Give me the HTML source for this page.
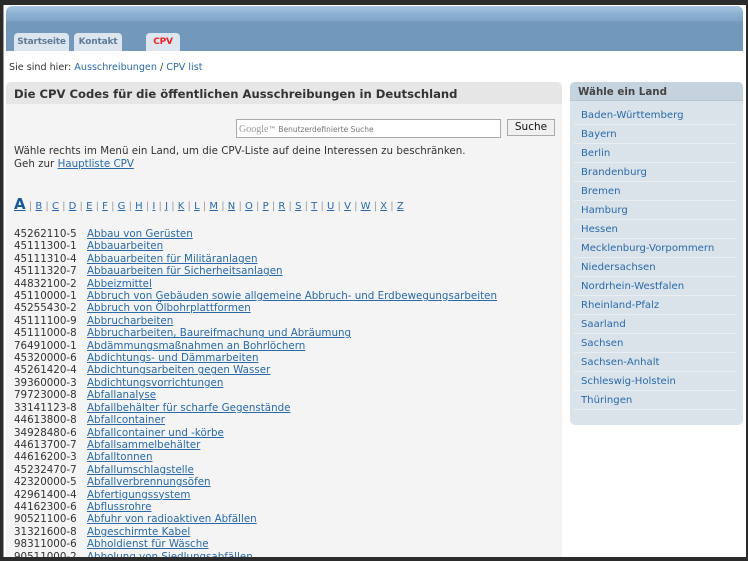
<!DOCTYPE html>
<html><head><meta charset="utf-8">
<style>
*{margin:0;padding:0;box-sizing:border-box}
html,body{width:748px;height:561px;overflow:hidden;background:#2b2b2b}
body{font-family:"DejaVu Sans","Liberation Sans",sans-serif;position:relative}
#page{position:absolute;left:3px;top:5px;width:743px;height:552px;background:#fff;overflow:hidden;border-left:1px solid #999}
#hdr{position:absolute;left:2px;top:1px;width:737px;height:45px;border-radius:6px 6px 0 0;background:linear-gradient(#a9c6e0 0,#8cb0d2 8px,#7ea4c6 15px,#7299bb 16px,#7299bb 45px)}
.tab{position:absolute;top:27px;height:18px;background:#dde5ee;border-radius:4px 4px 0 0;font-size:9px;font-weight:bold;color:#5f7c98;text-align:center;line-height:19px;letter-spacing:-0.2px}
a{color:#2a6aa8}
#bc{position:absolute;left:5px;top:57px;font-size:9.6px;color:#333}
#bc a{text-decoration:none}
#main{position:absolute;left:2px;top:77px;width:556px;height:480px;background:#f4f4f4;border-radius:5px 5px 0 0}
#mh{height:22px;background:#e6e6e6;border-radius:5px 5px 0 0;font-size:11.6px;font-weight:bold;color:#333;padding:5px 0 0 8px}
#sbox{position:absolute;left:230px;top:37px;width:265px;height:19px;background:#fff;border:1px solid #aaa;font-size:7.5px;color:#777;padding:4px 0 0 2px}
#sbox b{font-family:"Liberation Serif",serif;font-weight:normal;font-size:10px;color:#999}
#sbtn{position:absolute;left:501px;top:37px;width:48px;height:17px;background:#f0f0f0;border:1px solid #aaa;font-size:10.5px;color:#111;text-align:center;line-height:15px}
#intro{position:absolute;left:8px;top:63px;font-size:10.3px;color:#333;line-height:13px}
#az{position:absolute;left:8px;top:113px;font-size:10px;color:#999;white-space:nowrap}
#az a{color:#2a6aa8;text-decoration:underline}
#az a.big{font-size:15px;font-weight:bold;color:#1a5a98}
#list{position:absolute;left:8px;top:146px;font-size:10.3px;line-height:12.4px;color:#333;white-space:nowrap}
#list a{text-decoration:underline}
#list span{display:inline-block;width:73px}
#side{position:absolute;left:566px;top:77px;width:173px;height:343px;background:#dae3ea;border-radius:5px}
#sh{height:19px;background:#c5d3de;border-bottom:1px solid #b8c6d2;border-radius:5px 5px 0 0;font-size:10.3px;font-weight:bold;color:#444;padding:4px 0 0 8px}
#side ul{list-style:none;margin:5px 7px 0 4px}
#side li{height:19px;border-bottom:1px solid #e8eef2;font-size:10.1px;color:#2a6aa8;padding:4px 0 0 7px}
</style></head><body>
<div id="page">
<div id="hdr">
<div class="tab" style="left:8px;width:55px">Startseite</div>
<div class="tab" style="left:68px;width:48px">Kontakt</div>
<div class="tab" style="left:140px;width:34px;color:#e22">CPV</div>
</div>
<div id="bc">Sie sind hier: <a>Ausschreibungen</a> / <a>CPV list</a></div>
<div id="main">
<div id="mh">Die CPV Codes für die öffentlichen Ausschreibungen in Deutschland</div>
<div id="sbox"><b>Google</b>™ Benutzerdefinierte Suche</div>
<div id="sbtn">Suche</div>
<div id="intro">Wähle rechts im Menü ein Land, um die CPV-Liste auf deine Interessen zu beschränken.<br>Geh zur <a style="text-decoration:underline">Hauptliste CPV</a></div>
<div id="az"><a class="big">A</a> | <a>B</a> | <a>C</a> | <a>D</a> | <a>E</a> | <a>F</a> | <a>G</a> | <a>H</a> | <a>I</a> | <a>J</a> | <a>K</a> | <a>L</a> | <a>M</a> | <a>N</a> | <a>O</a> | <a>P</a> | <a>R</a> | <a>S</a> | <a>T</a> | <a>U</a> | <a>V</a> | <a>W</a> | <a>X</a> | <a>Z</a></div>
<div id="list">
<span>45262110-5</span><a>Abbau von Gerüsten</a><br>
<span>45111300-1</span><a>Abbauarbeiten</a><br>
<span>45111310-4</span><a>Abbauarbeiten für Militäranlagen</a><br>
<span>45111320-7</span><a>Abbauarbeiten für Sicherheitsanlagen</a><br>
<span>44832100-2</span><a>Abbeizmittel</a><br>
<span>45110000-1</span><a>Abbruch von Gebäuden sowie allgemeine Abbruch- und Erdbewegungsarbeiten</a><br>
<span>45255430-2</span><a>Abbruch von Ölbohrplattformen</a><br>
<span>45111100-9</span><a>Abbrucharbeiten</a><br>
<span>45111000-8</span><a>Abbrucharbeiten, Baureifmachung und Abräumung</a><br>
<span>76491000-1</span><a>Abdämmungsmaßnahmen an Bohrlöchern</a><br>
<span>45320000-6</span><a>Abdichtungs- und Dämmarbeiten</a><br>
<span>45261420-4</span><a>Abdichtungsarbeiten gegen Wasser</a><br>
<span>39360000-3</span><a>Abdichtungsvorrichtungen</a><br>
<span>79723000-8</span><a>Abfallanalyse</a><br>
<span>33141123-8</span><a>Abfallbehälter für scharfe Gegenstände</a><br>
<span>44613800-8</span><a>Abfallcontainer</a><br>
<span>34928480-6</span><a>Abfallcontainer und -körbe</a><br>
<span>44613700-7</span><a>Abfallsammelbehälter</a><br>
<span>44616200-3</span><a>Abfalltonnen</a><br>
<span>45232470-7</span><a>Abfallumschlagstelle</a><br>
<span>42320000-5</span><a>Abfallverbrennungsöfen</a><br>
<span>42961400-4</span><a>Abfertigungssystem</a><br>
<span>44162300-6</span><a>Abflussrohre</a><br>
<span>90521100-6</span><a>Abfuhr von radioaktiven Abfällen</a><br>
<span>31321600-8</span><a>Abgeschirmte Kabel</a><br>
<span>98311000-6</span><a>Abholdienst für Wäsche</a><br>
<span>90511000-2</span><a>Abholung von Siedlungsabfällen</a>
</div>
</div>
<div id="side">
<div id="sh">Wähle ein Land</div>
<ul>
<li>Baden-Württemberg</li><li>Bayern</li><li>Berlin</li><li>Brandenburg</li><li>Bremen</li><li>Hamburg</li><li>Hessen</li><li>Mecklenburg-Vorpommern</li><li>Niedersachsen</li><li>Nordrhein-Westfalen</li><li>Rheinland-Pfalz</li><li>Saarland</li><li>Sachsen</li><li>Sachsen-Anhalt</li><li>Schleswig-Holstein</li><li>Thüringen</li>
</ul>
</div>
</div>
</body></html>
